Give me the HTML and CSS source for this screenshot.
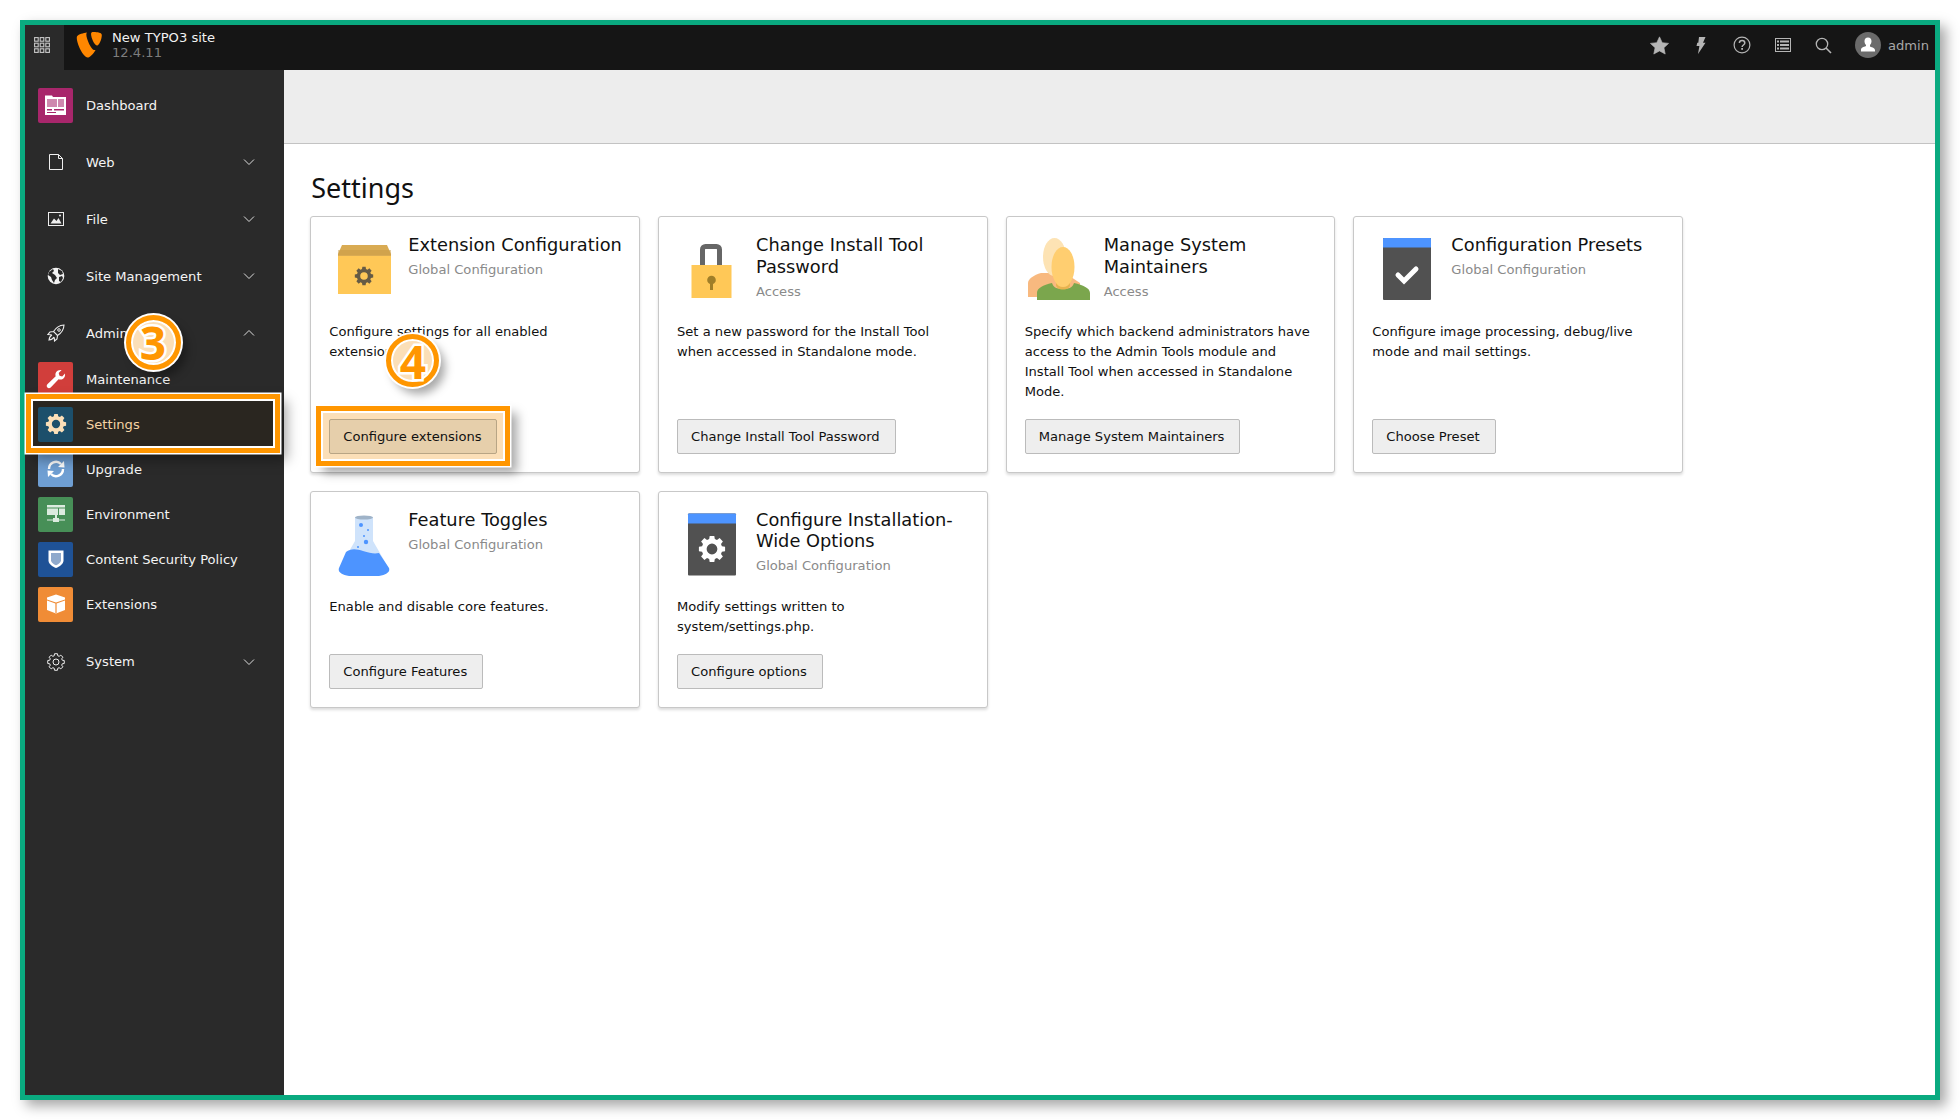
FILE: index.html
```html
<!DOCTYPE html>
<html lang="en">
<head>
<meta charset="utf-8">
<title>TYPO3 Settings</title>
<link rel="stylesheet" href="styles.css">
</head>
<body>
<svg class="defs" width="0" height="0" aria-hidden="true">
  <defs>
    <symbol id="gear" viewBox="0 0 18 18">
      <path fill="currentColor" fill-rule="evenodd" d="M15.25 7.21 17.27 7.54 17.27 10.46 15.25 10.79 14.69 12.15 15.88 13.81 13.81 15.88 12.15 14.69 10.79 15.25 10.46 17.27 7.54 17.27 7.21 15.25 5.85 14.69 4.19 15.88 2.12 13.81 3.31 12.15 2.75 10.79 .73 10.46 .73 7.54 2.75 7.21 3.31 5.85 2.12 4.19 4.19 2.12 5.85 3.31 7.21 2.75 7.54 .73 10.46 .73 10.79 2.75 12.15 3.31 13.81 2.12 15.88 4.19 14.69 5.85zM9 5.600a3.400 3.400 0 1 0 0 6.800 3.400 3.400 0 1 0 0-6.800z"/>
    </symbol>
    <symbol id="chev-down" viewBox="0 0 12 8">
      <path d="M1 1.5 6 6.5 11 1.5" fill="none" stroke="currentColor" stroke-width="1"/>
    </symbol>
    <symbol id="chev-up" viewBox="0 0 12 8">
      <path d="M1 6.5 6 1.5 11 6.5" fill="none" stroke="currentColor" stroke-width="1"/>
    </symbol>
  </defs>
</svg>
<div class="frame">
  <header class="topbar">
    <button class="apps" type="button" aria-label="Toggle menu">
      <svg width="16" height="16" viewBox="0 0 16 16"><g fill="none" stroke="currentColor" stroke-width="1.1"><rect x=".6" y=".6" width="3.6" height="3.6"/><rect x="6.2" y=".6" width="3.6" height="3.6"/><rect x="11.8" y=".6" width="3.6" height="3.6"/><rect x=".6" y="6.2" width="3.6" height="3.6"/><rect x="6.2" y="6.2" width="3.6" height="3.6"/><rect x="11.8" y="6.2" width="3.6" height="3.6"/><rect x=".6" y="11.8" width="3.6" height="3.6"/><rect x="6.2" y="11.8" width="3.6" height="3.6"/><rect x="11.8" y="11.8" width="3.6" height="3.6"/></g></svg>
    </button>
    <div class="brand">
      <svg class="brand-logo" width="26" height="26" viewBox="0 0 24 24"><path fill="#ff8700" d="M18.08 16.539c-.356.105-.64.144-1.012.144-3.048 0-7.524-10.652-7.524-14.197 0-1.305.31-1.74.745-2.114C6.56.808 2.47 2.06 1.164 3.649c-.283.389-.458.99-.458 1.766C.706 10.948 6.6 23.5 10.755 23.5c1.922 0 5.165-3.16 7.325-6.961M16.14 0c3.845 0 7.69.62 7.69 2.793 0 4.404-2.794 9.74-4.22 9.74-2.545 0-5.712-7.08-5.712-10.624C13.898.295 14.519 0 16.14 0"/></svg>
      <div class="brand-text">
        <div class="site">New TYPO3 site</div>
        <div class="version">12.4.11</div>
      </div>
    </div>
    <div class="tools">
      <span class="tool"><svg width="19" height="19" viewBox="0 0 18 18"><path fill="currentColor" stroke="currentColor" stroke-width=".6" stroke-linejoin="round" d="M9 .8l2.600 5.500 6 .7-4.400 4.100 1.200 6L9 14.100l-5.400 3 1.200-6L.4 7l6-.7z"/></svg></span>
      <span class="tool"><svg width="11" height="17" viewBox="0 0 11 17"><path fill="currentColor" d="M4 0h6.500L8 5.800h2.500L3 17l1.400-8H1.500l.8-3.200h1z"/></svg></span>
      <span class="tool"><svg width="18" height="18" viewBox="0 0 18 18"><circle cx="9" cy="9" r="7.900" fill="none" stroke="currentColor" stroke-width="1.200"/><path d="M6.400 7c0-1.500 1.100-2.500 2.700-2.500S11.800 5.500 11.800 7c0 2-2.700 2-2.700 4" fill="none" stroke="currentColor" stroke-width="1.500"/><rect x="8.200" y="12" width="1.800" height="1.800" fill="currentColor"/></svg></span>
      <span class="tool"><svg width="16" height="14" viewBox="0 0 16 14"><rect x=".5" y=".5" width="15" height="13" fill="none" stroke="currentColor"/><path fill="currentColor" d="M2 2.500h2v2H2zM5 2.500h9v2H5zM2 6h2v2H2zM5 6h9v2H5zM2 9.500h2v2H2zM5 9.500h9v2H5z"/></svg></span>
      <span class="tool"><svg width="17" height="17" viewBox="0 0 17 17"><circle cx="7" cy="7" r="5.700" fill="none" stroke="currentColor" stroke-width="1.300"/><path d="M11 11l5 5" stroke="currentColor" stroke-width="1.600"/></svg></span>
      <div class="user">
        <span class="avatar"><svg width="16" height="16" viewBox="0 0 16 16"><path fill="#fff" d="M8 .5c2.300 0 3.500 1.700 3.500 3.800 0 1.500-.7 3-1.500 3.800v1.400c.8.500 4.800 1.300 5 3.500v1.500H1V12.500c.2-2.200 4.200-3 5-3.500V8.100C5.200 7.300 4.500 5.800 4.500 4.300 4.500 2.200 5.700.5 8 .5z"/></svg></span>
        <span class="user-name">admin</span>
      </div>
    </div>
  </header>
  <div class="workspace">
    <nav class="sidebar">
      <div class="item">
        <span class="mod mod-dash"><svg width="21" height="21" viewBox="0 0 21 21"><path fill="#fff" d="M0 .5h7l1 1.500h13v18H0z"/><path fill="#a8266b" opacity=".55" d="M2 4h10v5H2zM13 4h6v8h-6zM2 9h10v3H2z"/><path fill="#a8266b" d="M2 14h5v1.500H2zM9 14h10v1.500H9zM2 17h9v1H2z"/></svg></span>
        <span class="label">Dashboard</span>
      </div>
      <div class="item">
        <span class="glyph"><svg width="14" height="16" viewBox="0 0 14 16"><path d="M.5.5h9l4 4v11H.5z M9.500.5v4h4" fill="none" stroke="currentColor"/></svg></span>
        <span class="label">Web</span>
        <svg class="chev" width="12" height="8"><use href="#chev-down"/></svg>
      </div>
      <div class="item">
        <span class="glyph"><svg width="16" height="14" viewBox="0 0 16 14"><rect x=".5" y=".5" width="15" height="13" fill="none" stroke="currentColor"/><path fill="currentColor" d="M2.500 11.500l3.500-5 2.500 2.500 2-3 3 5.500z"/><circle cx="12" cy="3.500" r="1" fill="currentColor"/></svg></span>
        <span class="label">File</span>
        <svg class="chev" width="12" height="8"><use href="#chev-down"/></svg>
      </div>
      <div class="item">
        <span class="glyph"><svg width="18" height="18" viewBox="0 0 18 18"><circle cx="9" cy="9" r="8.300" fill="#f4f4f4"/><path fill="#2a2a2a" d="M2 5l4-3 1 2-2 2 3 2 2 3-2 2-1 3-2-3-1-3-3-2zM11 2l4 2 1 3-3 1-2-2zM12 10l3-1 1 2-2 4-2-1z"/></svg></span>
        <span class="label">Site Management</span>
        <svg class="chev" width="12" height="8"><use href="#chev-down"/></svg>
      </div>
      <div class="item anchor">
        <span class="glyph"><svg width="18" height="18" viewBox="0 0 18 18"><path d="M17 1c-5 .3-8 2.500-10.500 6.500l4 4C14.500 9 16.800 6 17 1zM6.500 7.500L3 8 1 10.500l3.500.2M10.500 11.500L10 15l-2.500 2-.2-3.500M5 11c-1.500.7-2.700 2.500-3 5 2.500-.3 4.300-1.500 5-3" fill="none" stroke="currentColor" stroke-width="1.100"/><circle cx="12" cy="6" r="1.300" fill="none" stroke="currentColor" stroke-width="1"/></svg></span>
        <span class="label">Admin Tools</span>
        <svg class="chev" width="12" height="8"><use href="#chev-up"/></svg>
        <span class="callout callout-three">3</span>
      </div>
      <div class="submenu">
        <div class="sub">
          <span class="mod mod-maint"><svg width="20" height="20" viewBox="0 0 20 20"><path fill="#fff" d="M19 4.500c.4 2.300-.4 4.300-2.200 5.400-1.400.8-2.900.9-4.200.4L4.700 18.500c-1 1-2.400 1-3.300.1s-.9-2.300 0-3.300l8.300-8c-.5-1.400-.3-2.900.5-4.200C11.300 1.300 13.400.6 15.600 1l-2.900 3 .8 2.800 2.700.6z"/></svg></span>
          <span class="label">Maintenance</span>
        </div>
        <div class="sub sub-active">
          <span class="mod mod-set"><svg class="peach" width="22" height="22"><use href="#gear"/></svg></span>
          <span class="label">Settings</span>
        </div>
        <div class="sub">
          <span class="mod mod-up"><svg width="22" height="22" viewBox="0 0 22 22"><path d="M4 11a7 7 0 0 1 12-5M18 11a7 7 0 0 1-12 5" fill="none" stroke="#fff" stroke-width="2.400"/><path fill="#fff" d="M13 9l6.500.5L19 3zM9 13l-6.500-.500L3 19z"/></svg></span>
          <span class="label">Upgrade</span>
        </div>
        <div class="sub">
          <span class="mod mod-env"><svg width="20" height="20" viewBox="0 0 20 20"><rect x="1" y="1" width="18" height="10" fill="#dcebdf"/><path fill="#478f57" d="M1 3.500h18v1H1zM12 4.500h1V11h-1z"/><path fill="#dcebdf" d="M9 11h2v3H9zM1 15.500h18v1H1zM7 14h6v4H7z"/></svg></span>
          <span class="label">Environment</span>
        </div>
        <div class="sub">
          <span class="mod mod-csp"><svg width="16" height="20" viewBox="0 0 16 20"><path fill="#fff" d="M.5 1.500h15v10c0 3.500-4 6-7.500 7.500C4.500 17.500.5 15 .5 11.500z"/><path fill="#8fa9cc" d="M3 4h10v7.500c0 2-2.800 3.800-5 4.800-2.200-1-5-2.800-5-4.800z"/></svg></span>
          <span class="label">Content Security Policy</span>
        </div>
        <div class="sub">
          <span class="mod mod-ext"><svg width="20" height="20" viewBox="0 0 20 20"><path fill="#fff" d="M1 3.500 10 .5l9 3v12.500L10 19.500 1 16z"/><path fill="#f08c36" d="M1 5.500 10 8.500l9-3v1L10.600 9.500V19h-1.200V9.500L1 6.500z"/></svg></span>
          <span class="label">Extensions</span>
        </div>
      </div>
      <div class="item">
        <span class="glyph"><svg width="18" height="18" viewBox="0 0 18 18"><path fill="none" stroke="currentColor" stroke-linejoin="round" d="M15.25 7.21 17.27 7.54 17.27 10.46 15.25 10.79 14.69 12.15 15.88 13.81 13.81 15.88 12.15 14.69 10.79 15.25 10.46 17.27 7.54 17.27 7.21 15.25 5.85 14.69 4.19 15.88 2.12 13.81 3.31 12.15 2.75 10.79 .73 10.46 .73 7.54 2.75 7.21 3.31 5.85 2.12 4.19 4.19 2.12 5.85 3.31 7.21 2.75 7.54 .73 10.46 .73 10.79 2.75 12.15 3.31 13.81 2.12 15.88 4.19 14.69 5.85z"/><circle cx="9" cy="9" r="3" fill="none" stroke="currentColor"/></svg></span>
        <span class="label">System</span>
        <svg class="chev" width="12" height="8"><use href="#chev-down"/></svg>
      </div>
    </nav>
    <main class="content">
      <div class="module-head"></div>
      <div class="module-body">
        <h1 class="page-title">Settings</h1>
        <div class="cards">
          <article class="card anchor">
            <div class="card-head">
              <svg class="card-icon" width="64" height="64" viewBox="0 0 64 64"><path fill="#ffc857" d="M6 17h53v40H6z"/><path fill="#d9ab53" d="M10 8h45l4 9v2H6v-2z"/><path fill="#c99c46" opacity=".5" d="M6 13h53v5H6z"/><use href="#gear" x="22" y="29" width="20" height="20" class="gear-dark"/></svg>
              <div><h2 class="card-title">Extension Configuration</h2><p class="card-sub">Global Configuration</p></div>
            </div>
            <p class="card-text">Configure settings for all enabled extensions.</p>
            <div class="btn-mark"><a class="btn btn-marked">Configure extensions</a></div>
            <span class="callout callout-four">4</span>
          </article>
          <article class="card">
            <div class="card-head">
              <svg class="card-icon" width="64" height="64" viewBox="0 0 64 64"><path fill="none" stroke="#666" stroke-width="5" stroke-linejoin="round" d="M22.500 30V12.500a3 3 0 0 1 3-3h11a3 3 0 0 1 3 3V30"/><rect x="11.500" y="28" width="40" height="33" fill="#ffc857"/><circle cx="31.500" cy="43" r="4.300" fill="#a07e28"/><path fill="#a07e28" d="M30 44h3v9h-3z"/></svg>
              <div><h2 class="card-title">Change Install Tool Password</h2><p class="card-sub">Access</p></div>
            </div>
            <p class="card-text">Set a new password for the Install Tool when accessed in Standalone mode.</p>
            <a class="btn">Change Install Tool Password</a>
          </article>
          <article class="card">
            <div class="card-head">
              <svg class="card-icon" width="64" height="64" viewBox="0 0 64 64"><path fill="#f8b97f" d="M0 60V46c0-4 6-8 13-10h24l15 10v14z"/><ellipse cx="26.500" cy="20" rx="11.500" ry="19" fill="#fde3b4"/><path fill="#7ba64d" d="M9 63V56c0-5 6-8 15-10 1 3 3 6 11 6s10-3 11-6c9 2 16 5 16 10v7z"/><path fill="#e8b34f" d="M28 40h14v8c0 2.500-3 4.500-7 4.500s-7-2-7-4.500z"/><ellipse cx="35" cy="30" rx="11.500" ry="20" fill="#ffce70"/></svg>
              <div><h2 class="card-title">Manage System Maintainers</h2><p class="card-sub">Access</p></div>
            </div>
            <p class="card-text">Specify which backend administrators have access to the Admin Tools module and Install Tool when accessed in Standalone Mode.</p>
            <a class="btn">Manage System Maintainers</a>
          </article>
          <article class="card">
            <div class="card-head">
              <svg class="card-icon" width="64" height="64" viewBox="0 0 64 64"><rect x="8" y="1" width="48" height="62" rx="1" fill="#515151"/><path fill="#4d94ff" d="M8 2a1 1 0 0 1 1-1h46a1 1 0 0 1 1 1v8.500H8z"/><path d="M23 38l6 6 12-12" fill="none" stroke="#fff" stroke-width="5" stroke-linecap="round"/></svg>
              <div><h2 class="card-title">Configuration Presets</h2><p class="card-sub">Global Configuration</p></div>
            </div>
            <p class="card-text">Configure image processing, debug/live mode and mail settings.</p>
            <a class="btn">Choose Preset</a>
          </article>
          <article class="card">
            <div class="card-head">
              <svg class="card-icon" width="64" height="64" viewBox="0 0 64 64"><path fill="#cfe3fb" d="M23 5h18v24l15 26H8l15-26z"/><ellipse cx="32" cy="5.500" rx="9" ry="2" fill="#9fb3c8"/><path fill="#4d94ff" d="M14 40c5-4 11-3 17-1 7 2 11 3 16 2l10 15c2 6-7 9-25 9S5 62 7 56z"/><circle cx="29" cy="13" r="2" fill="#4d94ff"/><circle cx="36" cy="18" r="1" fill="#4d94ff"/><circle cx="32" cy="24" r="1" fill="#4d94ff"/><circle cx="34" cy="30" r="2.200" fill="#4d94ff"/><circle cx="26" cy="35" r="1" fill="#4d94ff"/></svg>
              <div><h2 class="card-title">Feature Toggles</h2><p class="card-sub">Global Configuration</p></div>
            </div>
            <p class="card-text">Enable and disable core features.</p>
            <a class="btn">Configure Features</a>
          </article>
          <article class="card">
            <div class="card-head">
              <svg class="card-icon" width="64" height="64" viewBox="0 0 64 64"><rect x="8" y="1.500" width="48" height="62" rx="1" fill="#515151"/><path fill="#4d94ff" d="M8 2.500a1 1 0 0 1 1-1h46a1 1 0 0 1 1 1v9H8z"/><use href="#gear" x="17.750" y="22.750" width="28.500" height="28.500" class="gear-white"/></svg>
              <div><h2 class="card-title">Configure Installation-Wide Options</h2><p class="card-sub">Global Configuration</p></div>
            </div>
            <p class="card-text">Modify settings written to system/settings.php.</p>
            <a class="btn">Configure options</a>
          </article>
        </div>
      </div>
    </main>
  </div>
</div>
</body>
</html>
```
FILE: styles.css
```css
*, *::before, *::after { box-sizing: border-box; }
html, body { height: 1120px; overflow: hidden; }
body { margin: 0; padding: 20px; background: #fff; font-family: "DejaVu Sans", Verdana, sans-serif; font-size: 13.100px; }
.defs { position: absolute; }
.frame { width: 1920px; height: 1080px; border: 5px solid #0aaa80; display: flex; flex-direction: column; background: #fff; box-shadow: 6px 6px 12px rgba(0,0,0,.35); }

.topbar { height: 45px; flex: none; display: flex; align-items: center; background: #151515; color: #bbb; }
.apps { width: 39px; height: 45px; flex: none; border: 0; padding: 0 5px 6px 0; background: #2a2a2a; color: #c8c8c8; display: flex; align-items: center; justify-content: center; }
.brand { display: flex; align-items: center; padding-left: 12px; margin-bottom: 5px; }
.brand-logo { margin-right: 10px; }
.site { color: #f2f2f2; line-height: 15px; }
.version { color: #7d7d7d; line-height: 15px; }
.tools { margin-left: auto; margin-bottom: 5px; display: flex; align-items: center; color: #b5b5b5; padding-right: 6px; }
.tool { width: 41px; display: flex; align-items: center; justify-content: center; }
.user { display: flex; align-items: center; margin-left: 10.500px; }
.avatar { width: 26px; height: 26px; border-radius: 50%; background: #6b6b6b; display: flex; align-items: center; justify-content: center; margin-right: 7px; }
.user-name { color: #a8a8a8; }

.workspace { flex: 1; display: flex; min-height: 0; }
.sidebar { width: 259px; flex: none; background: #2a2a2a; padding-top: 12.5px; color: #f4f4f4; }
.item, .sub { height: 45px; display: flex; align-items: center; padding-left: 13px; position: relative; }
.item { margin-bottom: 12px; }
.item.anchor { margin-bottom: 1px; }
.submenu { margin-bottom: 12.500px; }
.mod { width: 35px; height: 35px; flex: none; border-radius: 2px; display: flex; align-items: center; justify-content: center; }
.glyph { width: 35px; height: 35px; flex: none; display: flex; align-items: center; justify-content: center; color: #eee; }
.label { margin-left: 13px; white-space: nowrap; }
.chev { margin-left: auto; margin-right: 29px; color: #ddd; }
.mod-dash { background: #a8266b; }
.mod-maint { background: #d13e3b; }
.mod-set { background: #1c4f6b; }
.mod-up { background: #6f9fd3; }
.mod-env { background: #478f57; }
.mod-csp { background: #1f5296; }
.mod-ext { background: #f08c36; }
.peach { color: #fbdfb8; }

.sub-active { color: #f4d3a4; z-index: 2; }
.sub-active::before { content: ""; position: absolute; left: 1px; top: -7.500px; width: 254px; height: 59px; border: 5px solid #ff9600; box-shadow: 0 0 0 1.500px #fff, inset 0 0 0 2px #fff, 7px 7px 12px rgba(0,0,0,.35); background: #2a2620; }
.sub-active > * { position: relative; }

.content { flex: 1; min-width: 0; display: flex; flex-direction: column; }
.module-head { height: 74px; flex: none; background: #ededed; border-bottom: 1px solid #c3c3c3; }
.module-body { padding: 24px 0 0 26.3px; }
.page-title { margin: 0 0 8px; font: 400 27px/40px "Noto Sans", "Open Sans", sans-serif; color: #111; padding-left: 1px; }

.cards { display: grid; grid-template-columns: repeat(4, 329.700px); gap: 17.500px 18px; align-items: stretch; justify-content: start; }
.card { border: 1px solid #c8c8c8; border-radius: 3px; background: #fff; padding: 17px 18px 18px; display: flex; flex-direction: column; box-shadow: 0 2px 3px rgba(0,0,0,.14); position: relative; }
.card-head { display: flex; height: 70px; margin: 0 -9px 18px 0; }
.card-icon { flex: none; margin: 3px 12px 0 3px; }
.card-title { margin: 0; font-size: 17.800px; font-weight: 400; line-height: 21.500px; color: #111; }
.card-sub { margin: 4.500px 0 0; color: #8a8a8a; line-height: 20px; }
.card-text { margin: 0 0 17px; line-height: 20px; color: #111; }
.btn { margin-top: auto; align-self: flex-start; display: block; height: 35px; line-height: 33px; padding: 0 15px 0 13px; border: 1px solid #bbb; border-radius: 2px; background: #eee; color: #111; white-space: nowrap; }
.gear-dark { color: #665b45; }
.gear-white { color: #fff; }

.btn-mark { margin: auto 0 -12px -13px; align-self: flex-start; padding: 8px 8px 7px; border: 5px solid #ff9600; background: #fbdfb8; box-shadow: 0 0 0 1.500px #fff, inset 0 0 0 2px #fff, 7px 7px 10px rgba(0,0,0,.35); position: relative; }
.btn-marked { margin: 0; background: #e6cfab; border-color: #b8a585; padding: 0 14px 0 13px; }

.callout { position: absolute; z-index: 3; display: flex; align-items: center; justify-content: center; border-radius: 50%; background: #fbdfb8; border: 5px solid #ff9600; box-shadow: 0 0 0 2px #fff, inset 0 0 0 2px #fff, 6px 7px 10px rgba(0,0,0,.35); color: #ff9600; font: 700 46px/1 "Open Sans", sans-serif; -webkit-text-stroke: 5px #fff; paint-order: stroke fill; }
.callout-three { width: 55px; height: 55px; left: 100.500px; top: 4px; }
.callout-four { width: 53px; height: 53px; left: 75px; top: 117px; }
```
